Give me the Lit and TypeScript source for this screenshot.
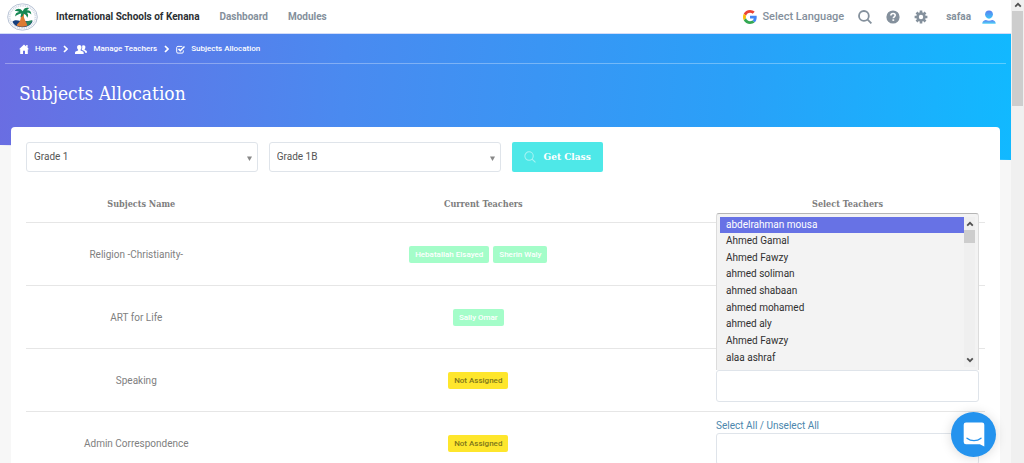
import { LitElement, html, css } from "lit";
import { customElement } from "lit/decorators.js";

interface Row {
  subject: string;
  teachers: string[];
}

const ROWS: Row[] = [
  { subject: "Religion -Christianity-", teachers: ["Hebatallah Elsayed", "Sherin Waly"] },
  { subject: "ART for Life", teachers: ["Sally Omar"] },
  { subject: "Speaking", teachers: [] },
  { subject: "Admin Correspondence", teachers: [] },
];

/* Rows whose links sit behind the open teacher list. */
const COVERED = 3;

const TEACHERS = [
  "abdelrahman mousa", "Ahmed Gamal", "Ahmed Fawzy", "ahmed soliman", "ahmed shabaan",
  "ahmed mohamed", "ahmed aly", "Ahmed Fawzy", "alaa ashraf",
];

const chevron = html`<svg viewBox="0 0 5 8" width="5" height="8" aria-hidden="true"><path d="M1 1l3 3-3 3" fill="none" stroke="currentColor" stroke-width="1.7"/></svg>`;

const lens = (size: number, weight: number) => html`<svg width=${size} height=${size} viewBox="0 0 14 14" aria-hidden="true"><g fill="none" stroke="currentColor" stroke-width=${weight}><circle cx="5.9" cy="5.9" r="4.9"/><path d="M9.4 9.4L13.4 13.4"/></g></svg>`;

const caret = (up: boolean) => html`<svg width="8" height="6" viewBox="0 0 8 6" aria-hidden="true"><path d=${up ? "M1.2 4.6L4 1.8l2.8 2.8" : "M1.2 1.4L4 4.2l2.8-2.8"} fill="none" stroke="#505050" stroke-width="1.8"/></svg>`;

const house = html`<svg width="10" height="10" viewBox="0 0 10 10" aria-hidden="true"><path d="M5 .4L0 5.2h1.2V10H4V6.8h2V10h2.8V5.2H10L8.6 3.8V1H7.2v1.4z" fill="currentColor"/></svg>`;

const people = html`<svg width="12" height="9" viewBox="0 0 12 9" aria-hidden="true"><g fill="currentColor"><path d="M4.300 0C2.700 0 2 1 2.100 2.400c0 1 .5 1.800 1 2.200v.8L.7 6.500C.1 6.800 0 7.400 0 9h8.700c0-1.600-.1-2.200-.7-2.500L5.600 5.400v-.8c.5-.4.9-1.200.9-2.200C6.600 1 5.900 0 4.300 0z"/><path d="M8.500.2c-.7 0-1.200.2-1.500.6.5 1.500.3 2.900-.4 3.900L9.200 6c.6.3.8.9.9 1.800H12c0-1.300-.1-1.700-.6-2L9.600 4.800v-.6c.4-.4.8-1 .8-1.900C10.500 1 9.800.2 8.500.2z"/></g></svg>`;

const tick = html`<svg width="9" height="9" viewBox="0 0 9 9" aria-hidden="true"><g fill="none" stroke="currentColor"><path d="M6.300 1.400H1.900a1.200 1.200 0 0 0-1.200 1.200v4.300a1.200 1.200 0 0 0 1.200 1.200h4.200a1.200 1.200 0 0 0 1.200-1.200V5.400"/><path d="M2.500 3.900l1.800 1.800L8.500 1.500" stroke-width="1.500"/></g></svg>`;

const google = html`<svg width="14" height="14" viewBox="0 0 48 48" aria-hidden="true">
  <path fill="#EA4335" d="M24 9.500c3.540 0 6.710 1.220 9.210 3.600l6.850-6.850C35.900 2.380 30.470 0 24 0 14.620 0 6.510 5.380 2.560 13.220l7.980 6.190C12.430 13.720 17.740 9.500 24 9.500z"/>
  <path fill="#4285F4" d="M46.980 24.550c0-1.570-.15-3.090-.38-4.550H24v9.020h12.940c-.58 2.960-2.260 5.480-4.780 7.180l7.730 6c4.510-4.180 7.090-10.360 7.090-17.650z"/>
  <path fill="#FBBC05" d="M10.530 28.590A14.500 14.500 0 0 1 9.770 24c0-1.600.27-3.140.76-4.590l-7.980-6.190A24 24 0 0 0 0 24c0 3.880.92 7.540 2.560 10.780z"/>
  <path fill="#34A853" d="M24 48c6.480 0 11.930-2.130 15.890-5.810l-7.730-6c-2.150 1.450-4.920 2.300-8.160 2.300-6.260 0-11.570-4.220-13.470-9.910l-7.980 6.190C6.510 42.620 14.620 48 24 48z"/></svg>`;

const help = html`<svg width="14" height="14" viewBox="0 0 14 14" aria-hidden="true"><circle cx="7" cy="7" r="6.600" fill="currentColor"/><path d="M4.900 5.500c0-1.300 1-2 2.200-2s2.100.7 2.100 1.800c0 1.500-1.900 1.500-1.900 3" fill="none" stroke="#fff" stroke-width="1.600"/><path d="M6.400 9.300h1.800v1.600H6.400z" fill="#fff"/></svg>`;

const gear = html`<svg width="14" height="14" viewBox="0 0 14 14" aria-hidden="true"><g stroke="currentColor" stroke-width="2.600"><path d="M7 .6v12.800M.6 7h12.800M2.500 2.500l9 9M11.500 2.500l-9 9"/></g><circle cx="7" cy="7" r="4.700" fill="currentColor"/><circle cx="7" cy="7" r="2.200" fill="#fff"/></svg>`;

const person = html`<svg width="14" height="14" viewBox="0 0 14 14" aria-hidden="true"><defs><linearGradient id="head" x2="0" y2="1"><stop stop-color="#5a7ff0"/><stop offset="1" stop-color="#3cc6f8"/></linearGradient><linearGradient id="body" x2="0" y2="1"><stop stop-color="#5a7ff0"/><stop offset="1" stop-color="#4fd2f8"/></linearGradient></defs><path d="M7 .5c2.500 0 3.900 1.500 3.900 3.700S9.300 8.700 7 8.700 3.100 6.400 3.100 4.200 4.500.5 7 .5z" fill="url(#head)"/><path d="M.3 13.700c0-2 1.200-3.200 3.500-3.700 1.900 1 4.500 1 6.400 0 2.300.5 3.500 1.700 3.500 3.700z" fill="url(#body)"/></svg>`;

const crest = html`<svg width="31" height="28" viewBox="0 0 31 28" role="img" aria-label="School crest">
  <ellipse cx="15.500" cy="14" rx="14.800" ry="13.200" fill="#fff" stroke="#b9c4d6" stroke-width="1"/>
  <ellipse cx="15.500" cy="14" rx="12.900" ry="11.300" fill="none" stroke="#d3dae6" stroke-width="2" stroke-dasharray="1 .8"/>
  <ellipse cx="15.500" cy="14" rx="11" ry="9.900" fill="#fff"/>
  <path d="M5.500 18.500c3-2 5-1 8-.5h12c-.6 3.300-4.500 6.200-10 6.200S6.500 22 5.500 18.500z" fill="#173f7c"/>
  <path d="M19 18.500l6.500-1.500c-.7 2.800-2.800 4.900-5.500 6z" fill="#27865c"/>
  <path d="M9.500 22.500c1.500-2.800 3.500-3 4.200-7 .3-2 .4-4 1.600-5l1.900.6c-.8 2.200-.2 4.400 1 6.400 1 1.600 1.700 3.200 2.200 5-3.500 1.600-7.300 1.700-10.900 0z" fill="#dd7b32"/>
  <path d="M15.800 8.300C13 4.500 9.600 5.200 7.800 7.900c2.200 0 3.200.2 4.300 1.100-2.600.2-4 1.900-3.900 4.600 1.900-2.100 4.200-2.800 6.100-3.200l-.9 3.900c2-.7 2.900-2 3.100-3.600 1.800.4 3.200 1.900 3.700 4 1.500-1.800 1.100-3.700-.4-4.900 1.900-.2 3.400.2 4.500 1.600 0-3-1.900-4.500-4.800-4l2.500-2.200c-2.900-1-5.200.1-6.200 3.100z" fill="#178754"/></svg>`;

@customElement("app-root")
export class AppRoot extends LitElement {
  static styles = css`
    :host { display: flex; height: 100vh; overflow: hidden; font: 400 10px/16px Roboto, sans-serif; color: #808080; background: #f7f7f7; }
    * { box-sizing: border-box; }
    a { color: inherit; text-decoration: none; }
    svg { display: block; flex: none; }
    button, select { font: inherit; margin: 0; }
    .page { flex: 1; min-width: 0; overflow: hidden; }
    .slab { font-family: "Roboto Slab", "DejaVu Serif Condensed", "DejaVu Serif", serif; }
    .top { display: flex; align-items: center; height: 34px; padding: 0 15px 0 7px; background: #fff; border-bottom: 1px solid #d3dcf8; color: #84909c; font-weight: 700; }
    .logo { margin-right: 18px; }
    .brand { color: #2b2f33; margin-right: 20px; }
    .nav { display: flex; gap: 20px; flex: 1; }
    .tools { display: flex; align-items: center; gap: 14px; }
    .lang { display: flex; align-items: center; gap: 5px; font-size: 11px; font-weight: 500; }
    .tool { display: block; padding: 0; border: 0; background: none; color: inherit; }
    .user { display: flex; align-items: center; gap: 11px; margin-left: 4px; }
    .hero { height: 126px; padding: 0 5px; color: #fff; background: linear-gradient(94deg, #6a6de2 0%, #4a8af0 34%, #2aa0f8 72%, #11b9ff 100%); clip-path: polygon(0 0, 100% 0, 100% 100%, 0 111px); }
    .crumbs { display: flex; align-items: center; gap: 7px; height: 30px; padding: 1px 14px 0; border-bottom: 1px solid #ffffff50; font-size: 8px; font-weight: 500; }
    .crumb { display: flex; align-items: center; gap: 6px; }
    h1 { font-size: 19px; line-height: 24px; font-weight: 400; margin: 17px 14px 0; }
    .card { position: relative; margin: -33px 11px 0; padding: 15px; background: #fff; border-radius: 4px; }
    .filters { display: flex; gap: 11px; }
    .pick { position: relative; width: calc(25% - 8px); }
    .pick select { appearance: none; display: block; width: 100%; height: 30px; padding: 0 7px; border: 1px solid #dfe4ea; border-radius: 3px; background: #fff; color: #555; font-size: 10px; }
    .arrow { position: absolute; right: 6px; top: 14px; }
    .get { display: flex; align-items: center; gap: 8px; height: 30px; padding: 0 12px; border: 0; border-radius: 2px; background: #4ee8e8; color: #fff; font-weight: 700; font-size: 10px; }
    .get svg { opacity: .5; }
    table { width: 100%; border-collapse: collapse; table-layout: fixed; margin-top: 14px; text-align: center; }
    th { height: 36px; padding: 0 0 0 10px; font-size: 9px; font-weight: 700; color: #7d7d7d; }
    td { height: 63px; padding: 2px 0 0; border-top: 1px solid #e6e6e6; }
    .subject { width: 23%; }
    .select { width: 275px; padding: 0; }
    .badges { display: flex; justify-content: center; gap: 4px; }
    .badge { padding: 0 6px; border-radius: 2px; line-height: 17px; font-size: 8px; font-weight: 500; background: #a4fdc9; color: #fff; }
    .none { background: #fee62c; color: #80761a; }
    .choose { position: relative; padding: 6px 6px 9px; text-align: left; vertical-align: top; }
    .links { line-height: 15px; color: #4c87ad; }
    .covered { visibility: hidden; }
    .box { display: block; width: 100%; height: 32px; overflow: hidden; border: 1px solid #dfe4ea; border-radius: 3px; background: #fff; outline: 0; }
    .list { position: absolute; z-index: 2; left: 6px; right: 6px; top: -10px; display: flex; height: 157px; padding: 3px; background: #f3f3f3; border: 1px solid #dcdcdc; border-top-color: #b5b5b5; border-bottom: 0; border-radius: 3px 3px 0 0; }
    .names { flex: 1; display: grid; grid-template-rows: repeat(9, 1fr); margin: 0; padding: 0; list-style: none; color: #303030; }
    .names li { padding: 0 6px; }
    .names .on { background: #6772e5; color: #fff; }
    .bar { display: flex; flex-direction: column; align-items: center; justify-content: space-between; width: 11px; padding: 4px 0; background: #efefef; }
    .ends { display: flex; flex-direction: column; align-items: center; gap: 3px; width: 100%; }
    .thumb { width: 100%; height: 13px; background: #cdcdcd; }
    .scroll { display: flex; flex-direction: column; align-items: center; gap: 3px; width: 13px; padding: 2px 1px; background: #f0f0f0; }
    .grip { width: 100%; height: 95px; background: #cdcdcd; }
    .chat { position: fixed; right: 28px; bottom: 6px; z-index: 3; display: grid; place-items: center; width: 45px; height: 45px; padding: 0; border: 0; border-radius: 50%; background: #2493ee; box-shadow: 0 1px 12px #00000026; }
  `;

  private badges(row: Row) {
    return row.teachers.length
      ? row.teachers.map((name) => html`<span class="badge">${name}</span>`)
      : html`<span class="badge none">Not Assigned</span>`;
  }

  private picker(label: string, value: string) {
    return html`<div class="pick">
      <select aria-label=${label}><option>${value}</option></select>
      <svg class="arrow" width="5" height="5" viewBox="0 0 5 5" aria-hidden="true"><path d="M0 .5h5L2.500 5z" fill="#888"/></svg>
    </div>`;
  }

  private teacherList() {
    return html`<div class="list">
      <ul class="names" role="listbox" aria-label="Teachers">
        ${TEACHERS.map((name, i) => html`<li role="option" aria-selected=${i === 0} class=${i === 0 ? "on" : ""}>${name}</li>`)}
      </ul>
      <div class="bar"><div class="ends">${caret(true)}<div class="thumb"></div></div>${caret(false)}</div>
    </div>`;
  }

  render() {
    return html`
      <div class="page">
        <header class="top">
          <a class="logo" href="#">${crest}</a>
          <a class="brand" href="#">International Schools of Kenana</a>
          <nav class="nav"><a href="#">Dashboard</a><a href="#">Modules</a></nav>
          <div class="tools">
            <a class="lang" href="#">${google}Select Language</a>
            <button class="tool" aria-label="Search">${lens(14, 1.8)}</button>
            <button class="tool" aria-label="Help">${help}</button>
            <button class="tool" aria-label="Settings">${gear}</button>
            <a class="user" href="#">safaa ${person}</a>
          </div>
        </header>
        <section class="hero">
          <nav class="crumbs" aria-label="Breadcrumb">
            <a class="crumb" href="#">${house}Home</a>${chevron}
            <a class="crumb" href="#">${people}Manage Teachers</a>${chevron}
            <a class="crumb" href="#">${tick}Subjects Allocation</a>
          </nav>
          <h1 class="slab">Subjects Allocation</h1>
        </section>
        <main class="card">
          <div class="filters">
            ${this.picker("Grade", "Grade 1")} ${this.picker("Class", "Grade 1B")}
            <button class="get slab">${lens(12, 1.2)}Get Class</button>
          </div>
          <table>
            <thead class="slab">
              <tr><th class="subject">Subjects Name</th><th>Current Teachers</th><th class="select">Select Teachers</th></tr>
            </thead>
            <tbody>
              ${ROWS.map((row, i) => html`<tr>
                <td>${row.subject}</td>
                <td><div class="badges">${this.badges(row)}</div></td>
                <td class="choose">
                  <div class="links ${i < COVERED ? "covered" : ""}"><a href="#">Select All</a> / <a href="#">Unselect All</a></div>
                  <select class="box" multiple aria-label=${`Teachers for ${row.subject}`}></select>
                  ${i === 0 ? this.teacherList() : ""}
                </td>
              </tr>`)}
            </tbody>
          </table>
        </main>
      </div>
      <div class="scroll">${caret(true)}<div class="grip"></div></div>
      <button class="chat" aria-label="Open chat"><svg width="22" height="25" viewBox="0 0 22 25" aria-hidden="true"><path d="M3 .5h16a2.300 2.300 0 0 1 2.300 2.300V24.500l-4.500-2.200H3A2.300 2.300 0 0 1 .7 20V2.800A2.300 2.300 0 0 1 3 .5z" fill="#fff"/><path d="M4 16.200c4 3.200 10 3.200 14 0" fill="none" stroke="#2493ee" stroke-width="1.400" stroke-linecap="round"/></svg></button>
    `;
  }
}
